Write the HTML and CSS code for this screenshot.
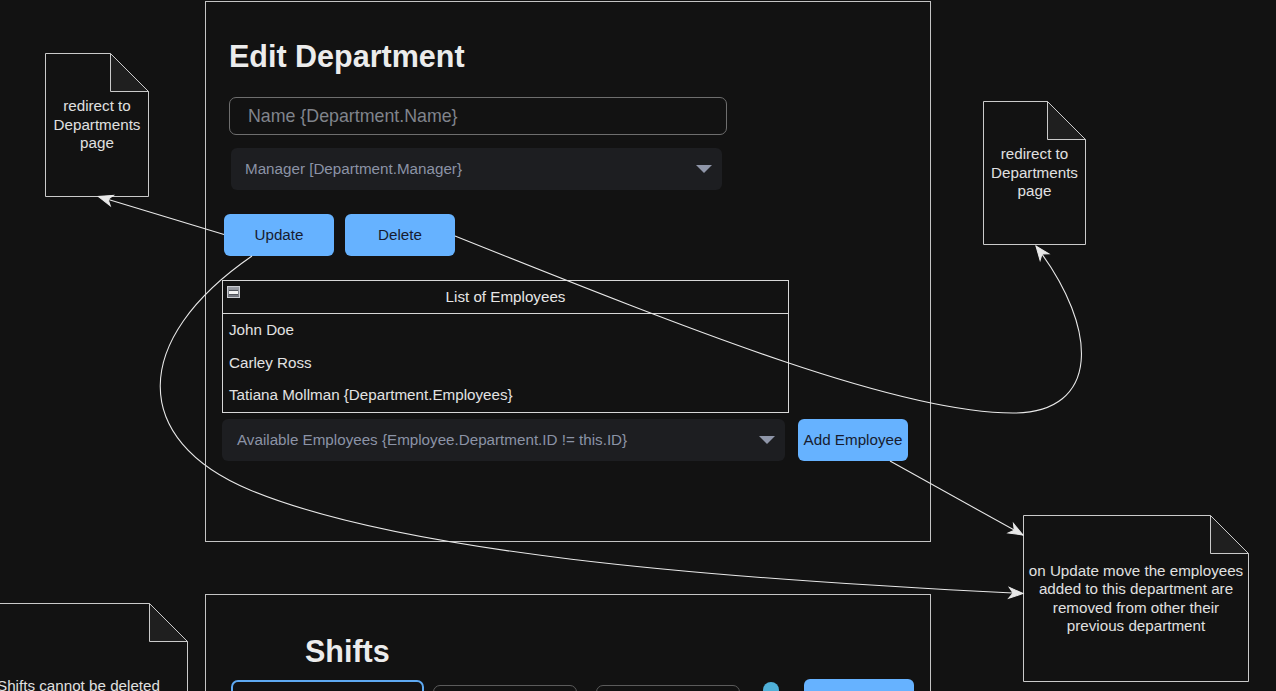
FILE: index.html
```html
<!DOCTYPE html>
<html lang="en">
<head>
<meta charset="utf-8">
<title>Edit Department</title>
<link rel="stylesheet" href="styles.css">
</head>
<body>
<div class="canvas">

  <section class="frame frame-edit">
    <h1 class="title title-edit">Edit Department</h1>
    <div class="text-input name-input">Name {Department.Name}</div>
    <div class="select manager-select">
      <span>Manager [Department.Manager}</span>
      <span class="caret"></span>
    </div>
    <div class="button-row">
      <button class="btn">Update</button>
      <button class="btn">Delete</button>
    </div>
    <div class="list">
      <div class="list-header">
        <span class="collapse-icon"><span class="collapse-bar"></span></span>
        <span>List of Employees</span>
      </div>
      <div class="list-rows">
        <div class="list-row">John Doe</div>
        <div class="list-row">Carley Ross</div>
        <div class="list-row">Tatiana Mollman {Department.Employees}</div>
      </div>
    </div>
    <div class="add-row">
      <div class="select avail-select">
        <span>Available Employees {Employee.Department.ID != this.ID}</span>
        <span class="caret"></span>
      </div>
      <button class="btn btn-add">Add Employee</button>
    </div>
  </section>

  <section class="frame frame-shifts">
    <h1 class="title title-shifts">Shifts</h1>
    <div class="shift-row">
      <div class="shift-input shift-input-active"></div>
      <div class="shift-input shift-input-a"></div>
      <div class="shift-input shift-input-b"></div>
      <span class="shift-dot"></span>
      <button class="btn shift-btn"></button>
    </div>
  </section>

  <div class="note note-1">
    <svg class="note-shape" width="104" height="144" viewBox="0 0 104 144">
      <path class="note-body" d="M0.5 0.5 H65.5 L103.5 38.5 V143.5 H0.5 Z"/>
      <path class="note-fold" d="M65.5 0.5 V38.5 H103.5 Z"/>
    </svg>
    <p class="note-text">redirect to<br>Departments<br>page</p>
  </div>

  <div class="note note-2">
    <svg class="note-shape" width="103" height="144" viewBox="0 0 103 144">
      <path class="note-body" d="M0.5 0.5 H64.5 L102.5 38.5 V143.5 H0.5 Z"/>
      <path class="note-fold" d="M64.5 0.5 V38.5 H102.5 Z"/>
    </svg>
    <p class="note-text">redirect to<br>Departments<br>page</p>
  </div>

  <div class="note note-3">
    <svg class="note-shape" width="226" height="167" viewBox="0 0 226 167">
      <path class="note-body" d="M0.5 0.5 H187.5 L225.5 38.5 V166.5 H0.5 Z"/>
      <path class="note-fold" d="M187.5 0.5 V38.5 H225.5 Z"/>
    </svg>
    <p class="note-text">on Update move the employees<br>added to this department are<br>removed from other their<br>previous department</p>
  </div>

  <div class="note note-4">
    <svg class="note-shape" width="219" height="167" viewBox="0 0 219 167">
      <path class="note-body" d="M0.5 0.5 H180.5 L218.5 38.5 V166.5 H0.5 Z"/>
      <path class="note-fold" d="M180.5 0.5 V38.5 H218.5 Z"/>
    </svg>
    <p class="note-text">Shifts cannot be deleted</p>
  </div>

  <svg class="edges" width="1276" height="691" viewBox="0 0 1276 691">
    <defs>
      <marker id="arrow" markerUnits="userSpaceOnUse" markerWidth="18" markerHeight="14" viewBox="-16 -7 18 14" refX="0" refY="0" orient="auto">
        <path d="M0 0 L-14 -5.5 L-10 0 L-14 5.5 Z" class="arrow-head"/>
      </marker>
    </defs>
    <path class="edge" d="M224 234.5 L98.5 196.5" marker-end="url(#arrow)"/>
    <path class="edge" d="M455 236 C700 334 900 413 1013 413 C1100 413 1100 330 1036 246" marker-end="url(#arrow)"/>
    <path class="edge" d="M890 461 L1023 535" marker-end="url(#arrow)"/>
    <path class="edge" d="M252 256 C130 340 130 440 250 490 C400 552 700 578 1023 593.5" marker-end="url(#arrow)"/>
  </svg>

</div>
</body>
</html>
```

FILE: styles.css
```css
* {
  box-sizing: border-box;
}

html, body {
  margin: 0;
  padding: 0;
  background: #121212;
}

body {
  width: 1276px;
  height: 691px;
  overflow: hidden;
  font-family: "Liberation Sans", Arial, sans-serif;
  color: #e2e2e2;
}

.canvas {
  position: relative;
  width: 1276px;
  height: 691px;
  overflow: hidden;
}

/* ---------- frames ---------- */
.frame {
  position: absolute;
  left: 205px;
  width: 726px;
  border: 1px solid #c4c4c4;
  background: #121212;
  display: flex;
  flex-direction: column;
  align-items: flex-start;
}

.frame-edit {
  top: 1px;
  height: 541px;
  padding: 36px 0 0 16px;
}

.frame-shifts {
  top: 594px;
  height: 200px;
  padding: 38px 0 0 0;
}

.title {
  margin: 0;
  font-size: 30.5px;
  line-height: 36px;
  font-weight: bold;
  color: #ececec;
}

.title-edit {
  margin-left: 7px;
}

.title-shifts {
  margin-left: 99px;
}

/* ---------- inputs ---------- */
.text-input {
  display: flex;
  align-items: center;
  border: 1px solid #6e6e6e;
  border-radius: 7px;
  color: #80848c;
}

.name-input {
  margin: 23px 0 0 7px;
  width: 498px;
  height: 38px;
  padding-left: 18px;
  font-size: 17.8px;
}

.select {
  position: relative;
  display: flex;
  align-items: center;
  justify-content: space-between;
  background: #1d1e21;
  border-radius: 6px;
  color: #8b93a6;
  font-size: 15.2px;
  padding-right: 10px;
  padding-bottom: 1px;
}

.caret {
  width: 0;
  height: 0;
  border-left: 8px solid transparent;
  border-right: 8px solid transparent;
  border-top: 8px solid #8f96a9;
}

.manager-select {
  margin: 13px 0 0 9px;
  width: 491px;
  height: 42px;
  padding-left: 14px;
}

/* ---------- buttons ---------- */
.button-row {
  display: flex;
  gap: 11px;
  margin: 24px 0 0 2px;
}

.btn {
  width: 110px;
  height: 42px;
  border: none;
  border-radius: 6px;
  background: #66b2ff;
  color: #171c30;
  font-family: "Liberation Sans", Arial, sans-serif;
  font-size: 15.2px;
  padding: 0 0 1px 0;
}

/* ---------- list ---------- */
.list {
  margin-top: 24px;
  width: 567px;
  height: 133px;
  border: 1px solid #d8d8d8;
  display: flex;
  flex-direction: column;
}

.list-header {
  position: relative;
  height: 33px;
  border-bottom: 1px solid #d8d8d8;
  display: flex;
  align-items: center;
  justify-content: center;
  padding-bottom: 2px;
  font-size: 15.2px;
  color: #e6e6e6;
}

.collapse-icon {
  position: absolute;
  left: 4px;
  top: 5px;
  width: 13px;
  height: 12px;
  border: 1px solid #c9cbd0;
  background: linear-gradient(#9a9da5, #70737b);
  display: flex;
  align-items: center;
  justify-content: center;
}

.collapse-bar {
  width: 9px;
  height: 3px;
  background: #f2f2f2;
  box-shadow: 0 -1px 0 #50535a, 0 1px 0 #50535a;
}

.list-rows {
  flex: 1;
  display: flex;
  flex-direction: column;
}

.list-row {
  flex: 1;
  display: flex;
  align-items: center;
  padding: 0 0 2px 6px;
  font-size: 15.2px;
  color: #e2e2e2;
}

/* ---------- add row ---------- */
.add-row {
  display: flex;
  gap: 13px;
  margin-top: 6px;
}

.avail-select {
  width: 563px;
  height: 42px;
  padding-left: 15px;
}

/* ---------- shifts row ---------- */
.shift-row {
  display: flex;
  align-items: flex-start;
  margin-top: 10px;
}

.shift-input {
  height: 40px;
  border: 1px solid #5b5b5b;
  border-radius: 7px;
}

.shift-input-active {
  margin: 1px 0 0 25px;
  width: 193px;
  border: 2px solid #5ea9f2;
}

.shift-input-a {
  margin: 6px 0 0 9px;
  width: 144px;
}

.shift-input-b {
  margin: 6px 0 0 19px;
  width: 144px;
}

.shift-dot {
  margin: 3px 0 0 23px;
  width: 16px;
  height: 16px;
  border-radius: 50%;
  background: #4fb0d8;
}

.shift-btn {
  margin-left: 25px;
}

/* ---------- notes ---------- */
.note {
  position: absolute;
  display: flex;
  align-items: center;
  justify-content: center;
}

.note-shape {
  position: absolute;
  left: 0;
  top: 0;
}

.note-body {
  fill: #121212;
  stroke: #cacaca;
  stroke-width: 1;
}

.note-fold {
  fill: #1f1f1f;
  stroke: #cacaca;
  stroke-width: 1;
}

.note-text {
  position: relative;
  margin: 0;
  text-align: center;
  white-space: nowrap;
  font-size: 15.2px;
  line-height: 18.5px;
  color: #e0e0e0;
}

.note-1 {
  left: 45px;
  top: 53px;
  width: 104px;
  height: 144px;
}

.note-2 {
  left: 983px;
  top: 101px;
  width: 103px;
  height: 144px;
}

.note-3 {
  left: 1023px;
  top: 515px;
  width: 226px;
  height: 167px;
}

.note-4 {
  left: -31px;
  top: 603px;
  width: 219px;
  height: 167px;
}

/* ---------- edges ---------- */
.edges {
  position: absolute;
  left: 0;
  top: 0;
  pointer-events: none;
  overflow: visible;
}

.edge {
  fill: none;
  stroke: #e8e8e8;
  stroke-width: 1.1;
}

.arrow-head {
  fill: #e8e8e8;
  stroke: #e8e8e8;
  stroke-width: 1;
  stroke-linejoin: miter;
}
```
